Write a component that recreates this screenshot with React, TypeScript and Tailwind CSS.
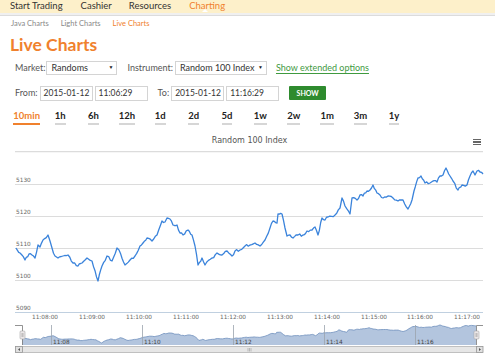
import React from "react";

const keys: [number, number][] = [
  [16, 245], [20, 250], [25, 257], [29, 251], [32, 252], [35, 255], [38, 242], [40, 244],
  [43, 237], [48, 232], [50, 238], [52, 245], [55, 253], [58, 255], [63, 253], [68, 252],
  [73, 260], [78, 263], [82, 260], [87, 255], [92, 258], [98, 278], [102, 263], [107, 253],
  [112, 258], [117, 245], [119, 247], [125, 262], [130, 257], [135, 253], [140, 243], [143, 240],
  [147, 235], [152, 238], [157, 232], [162, 218], [165, 219], [167, 215], [170, 216], [173, 222],
  [177, 222], [180, 230], [183, 232], [188, 227], [192, 232], [195, 243], [198, 262], [202, 255],
  [205, 262], [212, 255], [217, 250], [222, 252], [227, 248], [232, 253], [235, 248], [240, 247],
  [245, 243], [250, 242], [255, 240], [260, 243], [265, 237], [270, 225], [273, 218], [277, 220],
  [278, 211], [282, 211], [285, 225], [287, 233], [290, 232], [293, 235], [298, 232], [303, 232],
  [307, 228], [312, 227], [315, 224], [318, 232], [322, 215], [325, 217], [328, 214], [335, 212],
  [340, 205], [342, 195], [345, 203], [350, 211], [352, 195], [357, 197], [360, 192], [363, 193],
  [367, 188], [370, 187], [373, 182], [377, 190], [380, 192], [383, 195], [388, 193], [393, 195],
  [398, 198], [403, 197], [408, 206], [412, 197], [414, 188], [418, 175], [421, 173], [425, 180],
  [430, 180], [433, 178], [437, 179], [440, 173], [443, 172], [446, 165], [450, 173], [453, 178],
  [458, 187], [462, 182], [467, 182], [470, 173], [473, 168], [475, 172], [477, 168], [480, 169],
  [483, 171],
];

function buildSeries() {
  let seed = 11;
  const rnd = () => {
    seed = (seed * 9301 + 49297) % 233280;
    return seed / 233280;
  };
  const pts: [number, number][] = [];
  for (let i = 0; i < keys.length - 1; i++) {
    const [x0, y0] = keys[i];
    const [x1, y1] = keys[i + 1];
    const n = Math.max(1, Math.round((x1 - x0) / 1.6));
    for (let j = 0; j < n; j++) {
      const t = j / n;
      const jitter = j === 0 ? 0 : (rnd() - 0.5) * 2.6;
      pts.push([x0 + (x1 - x0) * t, y0 + (y1 - y0) * t + jitter]);
    }
  }
  pts.push(keys[keys.length - 1]);
  return pts;
}

const series = buildSeries();
const linePath = series.map(([x, y], i) => `${i ? "L" : "M"}${x.toFixed(1)},${y.toFixed(1)}`).join(" ");

// navigator: squeeze the series into the strip at the bottom
const navPts = series.map(([x, y]) => [22 + ((x - 16) * 454) / 467, 322 + ((y - 165) * 18) / 113]);
const navLine = navPts.map(([x, y], i) => `${i ? "L" : "M"}${x.toFixed(1)},${y.toFixed(1)}`).join(" ");
const navArea = `${navLine} L476,342 L22,342 Z`;

const yTicks = [
  { y: 181, label: "5130" },
  { y: 213, label: "5120" },
  { y: 245, label: "5110" },
  { y: 277, label: "5100" },
];
const xTicks = [
  [45, "11:08:00"], [92, "11:09:00"], [139, "11:10:00"], [186, "11:11:00"], [233, "11:12:00"],
  [280, "11:13:00"], [327, "11:14:00"], [374, "11:15:00"], [420, "11:16:00"], [467, "11:17:00"],
] as const;
const navTicks = [
  [51, "11:08"], [142, "11:10"], [233, "11:12"], [324, "11:14"], [415, "11:16"],
] as const;

const periods = ["10min", "1h", "6h", "12h", "1d", "2d", "5d", "1w", "2w", "1m", "3m", "1y"];

const Select = ({ value, w }: { value: string; w: string }) => (
  <div className={`${w} h-[14px] border border-[#d4d4d4] bg-white flex items-center justify-between pl-[4px] pr-[3px] text-[9px] text-[#333] whitespace-nowrap overflow-hidden`}>
    <span>{value}</span>
    <span className="text-[5px] text-[#222]">▼</span>
  </div>
);

const Field = ({ value }: { value: string }) => (
  <div className="w-[53px] h-[15px] border border-[#d4d4d4] bg-white flex items-center pl-[3px] text-[8.5px] text-[#333] whitespace-nowrap overflow-hidden">
    {value}
  </div>
);

export default function App() {
  return (
    <div className="w-[495px] h-[356px] bg-white overflow-hidden font-['Lato',sans-serif] text-[#333] whitespace-nowrap">
      {/* top menu */}
      <div className="h-[13px] bg-[#fdf0ca] flex items-center pl-[10px] text-[9.5px] text-[#333]">
        <span>Start Trading</span>
        <span className="ml-[18px]">Cashier</span>
        <span className="ml-[17px]">Resources</span>
        <span className="ml-[18px] text-[#f0812d] relative">
          Charting
          <span className="absolute left-[13px] top-[10px] w-0 h-0 border-l-[3px] border-r-[3px] border-b-[3px] border-l-transparent border-r-transparent border-b-white" />
        </span>
      </div>
      <div className="h-[3px] bg-[#f0f0f0] border-b border-[#dcdcdc]" />

      {/* sub menu */}
      <div className="h-[15px] flex items-center pl-[11px] text-[7.5px] text-[#888]">
        <span>Java Charts</span>
        <span className="ml-[12px]">Light Charts</span>
        <span className="ml-[12px] text-[#f0812d]">Live Charts</span>
      </div>

      <div className="pl-[10px] h-[25px] flex items-center mt-[1px]">
        <h1 className="text-[17.5px] leading-none font-bold text-[#f0812d]">Live Charts</h1>
      </div>

      {/* market row */}
      <div className="h-[20px] mt-[1px] flex items-center pl-[15px] text-[9px] text-[#555]">
        <span>Market:</span>
        <div className="ml-[1px]">
          <Select value="Randoms" w="w-[71px]" />
        </div>
        <span className="ml-[10px]">Instrument:</span>
        <div className="ml-[2px]">
          <Select value="Random 100 Index" w="w-[92px]" />
        </div>
        <span className="ml-[9px] text-[#3f9a3f] underline underline-offset-2">Show extended options</span>
      </div>

      {/* from/to row */}
      <div className="h-[20px] mt-[5px] flex items-center pl-[15px] text-[9px] text-[#555]">
        <span>From:</span>
        <div className="ml-[2px]"><Field value="2015-01-12" /></div>
        <div className="ml-[2px]"><Field value="11:06:29" /></div>
        <span className="ml-[10px]">To:</span>
        <div className="ml-[2px]"><Field value="2015-01-12" /></div>
        <div className="ml-[2px]"><Field value="11:16:29" /></div>
        <div className="ml-[10px] w-[37px] h-[14px] bg-[#2e8b2e] rounded-[1px] flex items-center justify-center text-white text-[7px] font-bold">
          SHOW
        </div>
      </div>

      {/* periods */}
      <div className="flex pl-[10px] mt-[7px] h-[15px]">
        {periods.map((p, i) => (
          <div key={p} className="w-[33.4px] flex justify-center">
            <span
              className={`text-[9.5px] leading-[11px] font-bold border-b-2 ${
                i === 0 ? "text-[#f0812d] border-[#f0812d]" : "text-[#222] border-[#d6d6d6]"
              }`}
            >
              {p}
            </span>
          </div>
        ))}
      </div>

      {/* chart header */}
      <div className="h-[20px] mt-[6px] flex items-center relative">
        <div className="flex-1 flex justify-center pl-[4px] font-['DejaVu_Sans',sans-serif] text-[8px] text-[#555]">
          Random 100 Index
        </div>
        <div className="absolute left-[473px] top-[8px] w-[8px] flex flex-col gap-[1px]">
          <div className="h-[1.3px] bg-[#666]" />
          <div className="h-[1.3px] bg-[#666]" />
          <div className="h-[1.3px] bg-[#666]" />
        </div>
      </div>

      <svg width="495" height="208" viewBox="0 148 495 208" className="block font-['DejaVu_Sans',sans-serif]">
        <line x1="15" x2="483" y1="148.5" y2="148.5" stroke="#dcdcdc" strokeWidth="1.5" />
        {yTicks.map((t) => (
          <g key={t.label}>
            <line x1="15" x2="483" y1={t.y + 0.5} y2={t.y + 0.5} stroke="#dcdcdc" />
            <text x="16" y={t.y - 2} fontSize="5.8" fill="#666">{t.label}</text>
          </g>
        ))}
        <text x="16" y="307" fontSize="5.8" fill="#666">5090</text>
        <line x1="15" x2="483" y1="309.5" y2="309.5" stroke="#c0d0e0" />
        {xTicks.map(([x, l]) => (
          <text key={l} x={x} y="316" fontSize="5.8" fill="#666" textAnchor="middle">{l}</text>
        ))}
        <path d={linePath} fill="none" stroke="#3a83db" strokeWidth="1.3" strokeLinejoin="round" />

        {/* navigator */}
        <path d={navArea} fill="#b3c5de" />
        <path d={navLine} fill="none" stroke="#6f8fbd" strokeWidth="0.8" />
        {navTicks.map(([x, l]) => (
          <g key={l}>
            <line x1={x + 0.5} x2={x + 0.5} y1="322" y2="342" stroke="#9aa3ad" strokeWidth="0.8" />
            <text x={x + 2} y="341" fontSize="5.8" fill="#444">{l}</text>
          </g>
        ))}
        <polyline points="15,322.5 22.5,322.5 22.5,342" fill="none" stroke="#777" strokeWidth="0.8" />
        <polyline points="483,322.5 476.5,322.5 476.5,342" fill="none" stroke="#777" strokeWidth="0.8" />
        <rect x="20" y="328" width="5" height="8" rx="1" fill="#ebe7e8" stroke="#a8a8a8" strokeWidth="0.6" />
        <line x1="22" x2="22" y1="330" y2="334" stroke="#888" strokeWidth="0.5" />
        <line x1="23" x2="23" y1="330" y2="334" stroke="#888" strokeWidth="0.5" />
        <rect x="474" y="328" width="5" height="8" rx="1" fill="#ebe7e8" stroke="#a8a8a8" strokeWidth="0.6" />
        <line x1="476" x2="476" y1="330" y2="334" stroke="#888" strokeWidth="0.5" />
        <line x1="477" x2="477" y1="330" y2="334" stroke="#888" strokeWidth="0.5" />

        {/* scrollbar */}
        <rect x="15.5" y="343.5" width="467" height="6" fill="#eeeeee" stroke="#bbbbbb" strokeWidth="0.8" />
        <rect x="22.5" y="343.5" width="454" height="6" fill="#e6e6e6" stroke="#bbbbbb" strokeWidth="0.8" />
        <rect x="15.5" y="343.5" width="7" height="6" fill="#e0e0e0" stroke="#999" strokeWidth="0.8" />
        <rect x="476.5" y="343.5" width="6.5" height="6" fill="#e0e0e0" stroke="#999" strokeWidth="0.8" />
        <path d="M20,345 L18,346.5 L20,348 Z" fill="#555" />
        <path d="M479,345 L481,346.5 L479,348 Z" fill="#555" />
        <line x1="248" x2="248" y1="345" y2="348.5" stroke="#888" strokeWidth="0.5" />
        <line x1="249.5" x2="249.5" y1="345" y2="348.5" stroke="#888" strokeWidth="0.5" />
        <line x1="251" x2="251" y1="345" y2="348.5" stroke="#888" strokeWidth="0.5" />
      </svg>
    </div>
  );
}
